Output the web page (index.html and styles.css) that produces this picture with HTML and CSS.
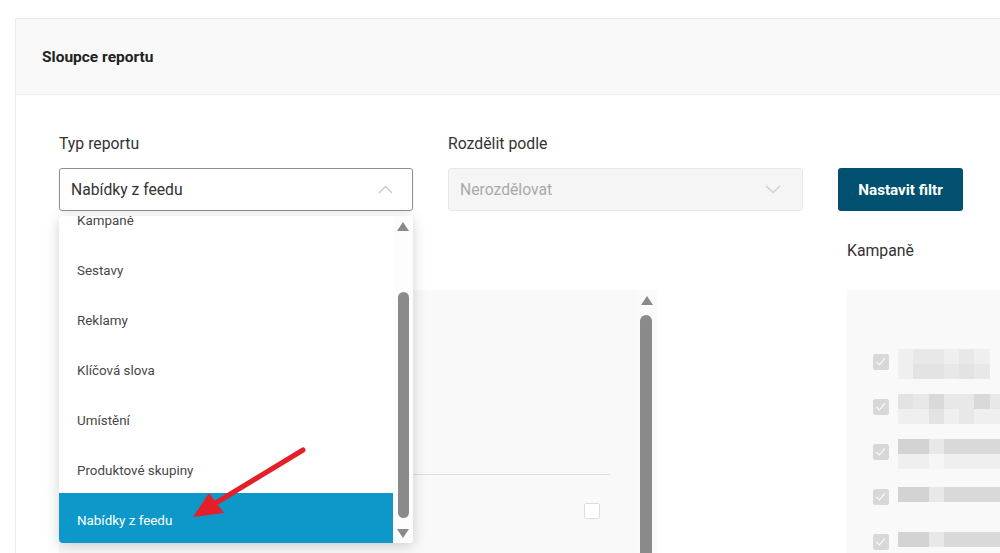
FILE: index.html
```html
<!DOCTYPE html>
<html lang="cs">
<head>
    <meta charset="UTF-8">
    <meta name="viewport" content="width=device-width, initial-scale=1.0">
    <title>Sloupce reportu</title>
    <link rel="stylesheet" href="styles.css">
</head>
<body>
    <div class="page">
        <div class="card">
            <div class="card-head">
                <h2 class="card-title">Sloupce reportu</h2>
            </div>
            <div class="card-body">
                <div class="filters">
                    <div class="field">
                        <label class="field-label">Typ reportu</label>
                        <div class="select select-open">
                            <span>Nabídky z feedu</span>
                            <svg class="chevron" width="15" height="9" viewBox="0 0 15 9"><path d="M1 8 L7.5 1.5 L14 8" fill="none" stroke="#c9c9c9" stroke-width="1.4"/></svg>
                        </div>
                        <div class="dropdown">
                            <div class="dropdown-list">
                                <div class="dropdown-inner">
                                    <div class="option">Kampaně</div>
                                    <div class="option">Sestavy</div>
                                    <div class="option">Reklamy</div>
                                    <div class="option">Klíčová slova</div>
                                    <div class="option">Umístění</div>
                                    <div class="option">Produktové skupiny</div>
                                    <div class="option option-active">Nabídky z feedu</div>
                                </div>
                            </div>
                            <div class="scroll scroll-dd">
                                <span class="arrow-up"></span>
                                <span class="thumb thumb-dd"></span>
                                <span class="arrow-down"></span>
                            </div>
                        </div>
                    </div>
                    <div class="field field-2">
                        <label class="field-label">Rozdělit podle</label>
                        <div class="select select-disabled">
                            <span>Nerozdělovat</span>
                            <svg class="chevron chevron-down" width="16" height="9" viewBox="0 0 16 9"><path d="M1 1 L8 7.5 L15 1" fill="none" stroke="#cfcfcf" stroke-width="1.4"/></svg>
                        </div>
                    </div>
                    <button class="btn">Nastavit filtr</button>
                </div>

                <div class="lower">
                    <div class="col-left">
                        <div class="panel panel-left">
                            <div class="panel-list">
                                <div class="panel-line"></div>
                                <div class="panel-row">
                                    <span class="cb"></span>
                                </div>
                            </div>
                            <div class="scroll scroll-panel">
                                <span class="arrow-up"></span>
                                <span class="thumb thumb-panel"></span>
                            </div>
                        </div>
                    </div>
                    <div class="col-right">
                        <div class="col-title">Kampaně</div>
                        <div class="panel panel-right">
                            <div class="camp">
                                <span class="cb cb-on"></span>
                                <div class="blur">
                                    <div class="blur-line"><i class="g1"></i><i class="g2"></i><i class="g2"></i><i class="g1"></i><i class="g2"></i><i class="g1"></i></div>
                                    <div class="blur-line"><i class="g1"></i><i class="g3"></i><i class="g3"></i><i class="g2"></i><i class="g3"></i><i class="g2"></i></div>
                                </div>
                            </div>
                            <div class="camp">
                                <span class="cb cb-on"></span>
                                <div class="blur">
                                    <div class="blur-line"><i class="g3"></i><i class="g2"></i><i class="g4"></i><i class="g2"></i><i class="g2"></i><i class="g4"></i><i class="g2"></i><i class="g2"></i></div>
                                    <div class="blur-line"><i class="g1"></i><i class="g1"></i><i class="g3"></i><i class="g1"></i><i class="g2"></i><i class="g1"></i><i class="g1"></i><i class="g1"></i></div>
                                </div>
                            </div>
                            <div class="camp">
                                <span class="cb cb-on"></span>
                                <div class="blur">
                                    <div class="blur-line"><i class="g5"></i><i class="g5"></i><i class="g2"></i><i class="g4"></i><i class="g4"></i><i class="g4"></i><i class="g4"></i><i class="g4"></i></div>
                                    <div class="blur-line"><i class="g1"></i><i class="g1"></i><i class="g6"></i><i class="g1"></i><i class="g1"></i><i class="g1"></i><i class="g1"></i><i class="g1"></i></div>
                                </div>
                            </div>
                            <div class="camp camp-one">
                                <span class="cb cb-on"></span>
                                <div class="blur">
                                    <div class="blur-line"><i class="g5"></i><i class="g5"></i><i class="g2"></i><i class="g4"></i><i class="g4"></i><i class="g4"></i><i class="g4"></i><i class="g4"></i></div>
                                </div>
                            </div>
                            <div class="camp camp-one">
                                <span class="cb cb-on"></span>
                                <div class="blur">
                                    <div class="blur-line"><i class="g5"></i><i class="g5"></i><i class="g2"></i><i class="g4"></i><i class="g4"></i><i class="g4"></i><i class="g4"></i><i class="g4"></i></div>
                                </div>
                            </div>
                        </div>
                    </div>
                </div>
            </div>
        </div>

        <!-- annotation arrow -->
        <svg class="annot" width="1000" height="553" viewBox="0 0 1000 553">
            <line x1="303" y1="450" x2="214" y2="504" stroke="#e51f28" stroke-width="5" stroke-linecap="round"/>
            <polygon points="193,517 209,493 224,513" fill="#e51f28"/>
        </svg>
    </div>
</body>
</html>
```

FILE: styles.css
```css
html, body {
    margin: 0;
    overflow: hidden;
    background: #fff;
}

body {
    font-family: "Roboto", "Liberation Sans", sans-serif;
    color: #333;
}

.page {
    position: relative;
    width: 1000px;
    height: 553px;
    padding: 18px 0 0 15px;
    box-sizing: border-box;
}

.card {
    width: 1100px;
    border-top: 1px solid #ececec;
    border-left: 1px solid #ececec;
}

.card-head {
    height: 75px;
    background: #f9f9f9;
    border-bottom: 1px solid #ececec;
    display: flex;
    align-items: center;
    padding-left: 26px;
}

.card-title {
    margin: 0;
    font-size: 15.5px;
    font-weight: 700;
    color: #222;
}

.card-body {
    padding: 38px 0 0 43px;
}

/* filter row */
.filters {
    display: flex;
    align-items: flex-end;
    gap: 35px;
}

.field {
    position: relative;
    width: 354px;
}

.field-2 { width: 355px; }

.field-label {
    display: block;
    font-size: 15.8px;
    line-height: 21px;
    margin-bottom: 14px;
    color: #333;
}

.select {
    height: 43px;
    box-sizing: border-box;
    border-radius: 3px;
    display: flex;
    align-items: center;
    justify-content: space-between;
    padding: 0 19px 0 11px;
    font-size: 15.7px;
}

.select-open {
    border: 1px solid #8f8f8f;
    color: #333;
    box-shadow: 0 1px 3px rgba(0, 0, 0, .08);
}

.select-disabled {
    border: 1px solid #e8e8e8;
    background: #f5f5f5;
    color: #a9a9a9;
    padding-right: 21px;
}

.chevron { display: block; margin-top: -1px; }

.btn {
    width: 125px;
    height: 43px;
    border: 0;
    border-radius: 3px;
    background: #01506f;
    color: #fff;
    font-family: inherit;
    font-size: 15.2px;
    font-weight: 700;
    padding: 0;
}

/* dropdown menu */
.dropdown {
    position: absolute;
    top: calc(100% + 5px);
    left: 0;
    width: 354px;
    height: 327px;
    background: #fff;
    border-radius: 4px;
    box-shadow: 0 3px 14px rgba(0, 0, 0, .18);
    display: flex;
    overflow: hidden;
    z-index: 5;
}

.dropdown-list {
    flex: 1;
    overflow: hidden;
}

.dropdown-inner { margin-top: -23px; }

.option {
    height: 50px;
    box-sizing: border-box;
    padding: 5px 0 0 18px;
    display: flex;
    align-items: center;
    font-size: 13.4px;
    color: #474747;
}

.option-active {
    background: #0e98c9;
    color: #fff;
}

/* scrollbars */
.scroll {
    display: flex;
    flex-direction: column;
    align-items: center;
}

.scroll-dd {
    width: 20px;
    background: #fdfdfd;
}

.arrow-up, .arrow-down {
    width: 0;
    height: 0;
    border-left: 6.5px solid transparent;
    border-right: 6.5px solid transparent;
}

.arrow-up { border-bottom: 9px solid #8a8a8a; }
.arrow-down { border-top: 9px solid #8a8a8a; }

.scroll-dd .arrow-up { margin-top: 6px; }
.scroll-dd .arrow-down { margin-top: 11px; }

.thumb {
    background: #8a8a8a;
    border-radius: 6px;
}

.thumb-dd {
    width: 11px;
    height: 226px;
    margin-top: 61px;
}

/* lower area */
.lower {
    display: flex;
    gap: 190px;
    margin-top: 30px;
}

.col-left {
    width: 598px;
    padding-top: 49px;
}

.col-title {
    font-size: 15.8px;
    line-height: 20px;
    margin-bottom: 29px;
    color: #333;
}

.panel {
    background: #f9f9f9;
    height: 300px;
}

.panel-left {
    display: flex;
}

.panel-list {
    flex: 1;
    padding-top: 184px;
}

.panel-line {
    height: 1px;
    background: #dedede;
    margin-right: 26px;
}

.panel-row {
    display: flex;
    justify-content: flex-end;
    padding: 28px 36px 0 0;
}

.scroll-panel {
    width: 21px;
    background: #fafafa;
}

.scroll-panel .arrow-up {
    margin-top: 6px;
    border-left-width: 6px;
    border-right-width: 6px;
}

.thumb-panel {
    width: 12px;
    height: 300px;
    margin-top: 10px;
    margin-left: -1px;
}

.cb {
    display: block;
    width: 16px;
    height: 16px;
    box-sizing: border-box;
    border: 1px solid #dcdcdc;
    border-radius: 2px;
    background: #fff;
}

.cb-on {
    position: relative;
    background: #d8d8d8;
    border-color: #d8d8d8;
}

.cb-on::after {
    content: "";
    position: absolute;
    left: 4px;
    top: 1px;
    width: 4px;
    height: 8px;
    border-right: 1.5px solid #fff;
    border-bottom: 1.5px solid #fff;
    transform: rotate(40deg);
}

.panel-right {
    width: 260px;
    padding: 59px 0 0 26px;
    box-sizing: border-box;
}

.camp {
    display: flex;
    gap: 9px;
    height: 45px;
}

.camp .cb { margin-top: 5px; flex: none; }
.camp-one .blur { margin-top: 3px; }

.blur { filter: blur(.4px); }

.blur-line { display: flex; }

.blur-line i {
    display: block;
    width: 15.3px;
    height: 15px;
}

.g1 { background: #efefef; }
.g2 { background: #e8e8e8; }
.g3 { background: #e3e3e3; }
.g4 { background: #d9d9d9; }
.g5 { background: #d3d3d3; }
.g6 { background: #f6f6f6; }

.annot {
    position: absolute;
    top: 0;
    left: 0;
    pointer-events: none;
    z-index: 10;
}
```
